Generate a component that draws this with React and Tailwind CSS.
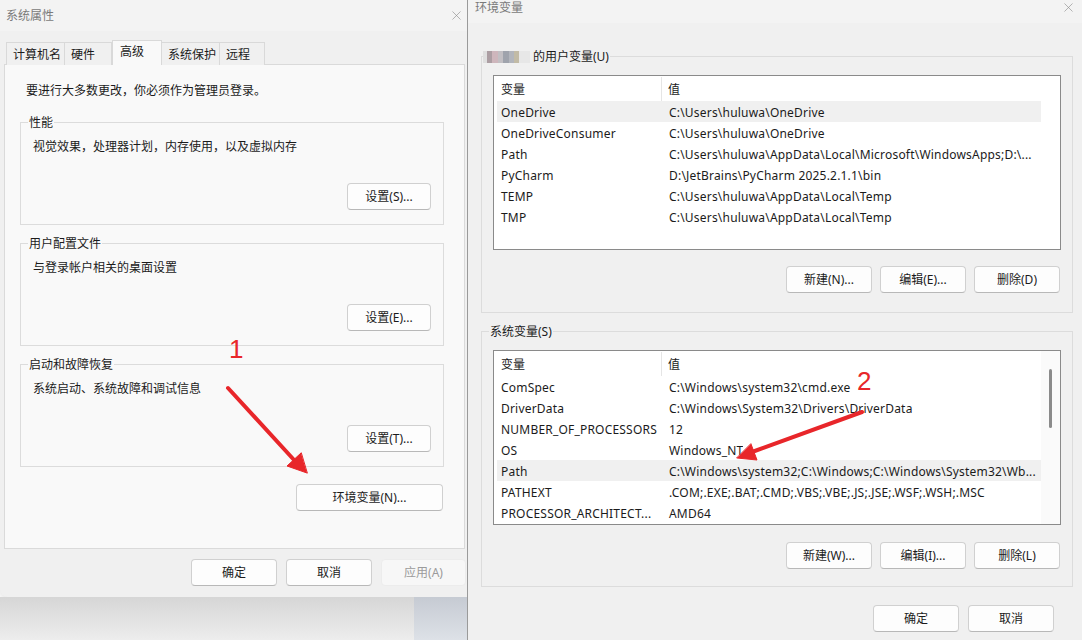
import React from 'react';
import { X } from 'lucide-react';

const userVars = [
  { name: 'OneDrive', value: 'C:\\Users\\huluwa\\OneDrive', selected: true },
  { name: 'OneDriveConsumer', value: 'C:\\Users\\huluwa\\OneDrive' },
  { name: 'Path', value: 'C:\\Users\\huluwa\\AppData\\Local\\Microsoft\\WindowsApps;D:\\...' },
  { name: 'PyCharm', value: 'D:\\JetBrains\\PyCharm 2025.2.1.1\\bin' },
  { name: 'TEMP', value: 'C:\\Users\\huluwa\\AppData\\Local\\Temp' },
  { name: 'TMP', value: 'C:\\Users\\huluwa\\AppData\\Local\\Temp' },
];

const sysVars = [
  { name: 'ComSpec', value: 'C:\\Windows\\system32\\cmd.exe' },
  { name: 'DriverData', value: 'C:\\Windows\\System32\\Drivers\\DriverData' },
  { name: 'NUMBER_OF_PROCESSORS', value: '12' },
  { name: 'OS', value: 'Windows_NT' },
  { name: 'Path', value: 'C:\\Windows\\system32;C:\\Windows;C:\\Windows\\System32\\Wb...', selected: true },
  { name: 'PATHEXT', value: '.COM;.EXE;.BAT;.CMD;.VBS;.VBE;.JS;.JSE;.WSF;.WSH;.MSC' },
  { name: 'PROCESSOR_ARCHITECT...', value: 'AMD64' },
];

const Btn = ({ children, className = '', disabled }) => (
  <div
    className={`flex items-center justify-center h-[27px] rounded-[4px] border text-[12px] leading-[16px] ${
      disabled
        ? 'border-[#ececec] bg-[#f7f7f7] text-[#9b9b9b]'
        : 'border-[#d0d0d0] border-b-[#b8b8b8] bg-[#fdfdfd] text-[#1b1b1b]'
    } ${className}`}
  >
    {children}
  </div>
);

const Group = ({ label, desc, btn }) => (
  <div className="relative h-[103px] border border-[#dcdcdc] flex flex-col">
    <span className="absolute -top-[8px] left-[7px] px-[1px] bg-[#f9f9f9] leading-[16px]">{label}</span>
    <p className="pl-[12px] pt-[16px] leading-[16px]">{desc}</p>
    <Btn className="w-[84px] mt-auto self-end mr-[12px] mb-[14px]">{btn}</Btn>
  </div>
);

const tabs = [
  { label: '计算机名', w: 'w-[59px]' },
  { label: '硬件', w: 'w-[48px]' },
  { label: '高级', w: 'w-[50px]', active: true },
  { label: '系统保护', w: 'w-[59px]' },
  { label: '远程', w: 'w-[46px]' },
];

const VarList = ({ rows, scroll }) => (
  <div className="h-[175px] mx-[11px] border border-[#8a8a8a] bg-white flex overflow-hidden">
    <div className="w-[547px] pl-[3px] pt-[1px] flex flex-col">
      <div className="h-[24px] flex">
        <div className="w-[165px] h-full pt-[5px] pl-[4px] border-r border-[#e5e5e5]">变量</div>
        <div className="pt-[5px] pl-[6px]">值</div>
      </div>
      {rows.map((r) => (
        <div key={r.name} className={`h-[21px] pt-[4px] flex whitespace-nowrap tracking-[0.2px] ${r.selected ? 'bg-[#f0f0f0]' : ''}`}>
          <div className="w-[166px] pl-[4px] overflow-hidden">{r.name}</div>
          <div className="pl-[6px] overflow-hidden">{r.value}</div>
        </div>
      ))}
    </div>
    <div className={`flex-1 flex justify-center pt-[18px] ${scroll ? 'bg-[#fafafa]' : ''}`}>
      {scroll && <div className="w-[3px] h-[59px] rounded-full bg-[#8b8b8b]" />}
    </div>
  </div>
);

export default function App() {
  return (
    <div className="relative w-[1082px] h-[640px] overflow-hidden flex text-[12px] leading-[16px] text-[#1b1b1b] font-['Segoe_UI','Noto_Sans','Noto_Sans_CJK_SC',sans-serif]">
      {/* 系统属性 */}
      <div className="w-[467px] flex flex-col">
        <div className="h-[597px] bg-[#f0f0f0] rounded-bl-[8px] flex flex-col shadow-[0_2px_10px_rgba(0,0,0,0.15)]">
          <div className="h-[31px] bg-[#f3f3f3] flex items-center justify-between pl-[6px] pr-[2px]">
            <span className="text-[#7a7a7a]">系统属性</span>
            <X size={15} strokeWidth={1} className="text-[#8a8a8a] mr-[1px]" />
          </div>
          <div className="flex items-end h-[25px] mt-[9px] pl-[6px] relative z-10 -mb-px">
            {tabs.map((t) => (
              <div
                key={t.label}
                className={`${t.w} border border-[#d9d9d9] border-b-0 ${
                  t.active ? 'h-[25px] bg-[#f9f9f9] pl-[7px] pt-[3px]' : 'h-[23px] bg-[#f0f0f0] pl-[6px] pt-[4px] -ml-px first:ml-0'
                }`}
              >
                {t.label}
              </div>
            ))}
          </div>
          <div className="ml-[4px] mr-[2px] h-[485px] border border-[#dadada] bg-[#f9f9f9] pl-[15px] pr-[20px] flex flex-col">
            <p className="mt-[18px] pl-[6px]">要进行大多数更改，你必须作为管理员登录。</p>
            <div className="mt-[23px]">
              <Group label="性能" desc="视觉效果，处理器计划，内存使用，以及虚拟内存" btn="设置(S)..." />
            </div>
            <div className="mt-[18px]">
              <Group label="用户配置文件" desc="与登录帐户相关的桌面设置" btn="设置(E)..." />
            </div>
            <div className="mt-[18px]">
              <Group label="启动和故障恢复" desc="系统启动、系统故障和调试信息" btn="设置(T)..." />
            </div>
            <Btn className="w-[147px] self-end mr-[1px] mt-[17px]">环境变量(N)...</Btn>
          </div>
          <div className="flex justify-end gap-[9px] mt-[10px] pr-[1px]">
            <Btn className="w-[86px]">确定</Btn>
            <Btn className="w-[86px]">取消</Btn>
            <Btn className="w-[85px]" disabled>应用(A)</Btn>
          </div>
        </div>
        <div className="flex-1 flex">
          <div className="flex-1 bg-gradient-to-b from-[#d6d6d6] to-[#ededed]" />
          <div className="w-[53px] bg-gradient-to-b from-[#c6cbd3] to-[#dde1e7]" />
        </div>
      </div>

      {/* 环境变量 */}
      <div className="flex-1 border-l border-[#9a9a9a] bg-[#f0f0f0] flex flex-col">
        <div className="h-[23px] bg-[#f3f3f3] flex items-start justify-between pl-[7px] pr-[6px]">
          <span className="text-[#7a7a7a] leading-[16px]">环境变量</span>
          <X size={15} strokeWidth={1} className="text-[#8a8a8a]" />
        </div>

        <div className="relative mt-[33px] ml-[13px] mr-[9px] h-[257px] border border-[#dcdcdc] flex flex-col">
          <div className="absolute -top-[8px] left-[1px] pr-[1px] bg-[#f0f0f0] flex items-center leading-[16px]">
            <div className="flex h-[12px] mr-[3px] opacity-80">
              <div className="w-[4px] bg-[#dcdcdc]" />
              <div className="w-[5px] bg-[#9c8a90]" />
              <div className="w-[6px] bg-[#c6a8b0]" />
              <div className="w-[5px] bg-[#b7b4b8]" />
              <div className="w-[6px] bg-[#8c919c]" />
              <div className="w-[5px] bg-[#a3a7b0]" />
              <div className="w-[5px] bg-[#b7ae94]" />
              <div className="w-[11px] bg-[#e6e6e6]" />
            </div>
            <span>的用户变量(U)</span>
          </div>
          <div className="mt-[18px]">
            <VarList rows={userVars} />
          </div>
          <div className="flex justify-end gap-[8px] mt-[16px] mr-[12px]">
            <Btn className="w-[86px]">新建(N)...</Btn>
            <Btn className="w-[86px]">编辑(E)...</Btn>
            <Btn className="w-[86px]">删除(D)</Btn>
          </div>
        </div>

        <div className="relative mt-[18px] ml-[13px] mr-[9px] h-[256px] border border-[#dcdcdc] flex flex-col">
          <span className="absolute -top-[8px] left-[7px] px-[1px] bg-[#f0f0f0] leading-[16px]">系统变量(S)</span>
          <div className="mt-[18px]">
            <VarList rows={sysVars} scroll />
          </div>
          <div className="flex justify-end gap-[8px] mt-[17px] mr-[12px]">
            <Btn className="w-[86px]">新建(W)...</Btn>
            <Btn className="w-[86px]">编辑(I)...</Btn>
            <Btn className="w-[86px]">删除(L)</Btn>
          </div>
        </div>

        <div className="flex justify-end gap-[9px] mt-[18px] mr-[28px]">
          <Btn className="w-[86px]">确定</Btn>
          <Btn className="w-[86px]">取消</Btn>
        </div>
      </div>

      {/* annotations */}
      <span className="absolute left-[229px] top-[334px] text-[26px] leading-[30px] text-[#e8262a] font-['Liberation_Sans',sans-serif]">1</span>
      <span className="absolute left-[857px] top-[366px] text-[26px] leading-[30px] text-[#e8262a] font-['Liberation_Sans',sans-serif]">2</span>
      <svg className="absolute inset-0 pointer-events-none" width="1082" height="640" viewBox="0 0 1082 640">
        <g fill="#e8262a" stroke="#e8262a" strokeLinecap="round" strokeLinejoin="round">
          <line x1="228" y1="388" x2="295" y2="461" strokeWidth="4" />
          <polygon points="307,473 287,466 301,453" strokeWidth="1" />
          <line x1="862" y1="412" x2="752" y2="452" strokeWidth="4" />
          <polygon points="737,458 757,460 751,444" strokeWidth="1" />
        </g>
      </svg>
    </div>
  );
}
